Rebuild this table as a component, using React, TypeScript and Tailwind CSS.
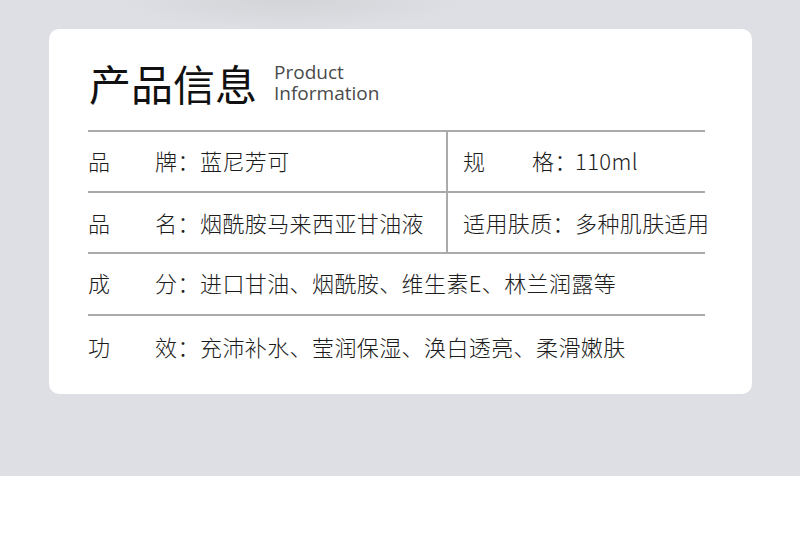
import React from "react";

const cjk = { fontFamily: '"Noto Sans CJK SC", "Noto Sans", sans-serif' };

function Label({ a, b }: { a: string; b: string }) {
  return (
    <span className="flex shrink-0">
      <span className="w-[67px]">{a}</span>
      <span className="w-[45px]">{b}：</span>
    </span>
  );
}

function Cell({ a, b, value }: { a: string; b: string; value: string }) {
  return (
    <div className="flex items-center whitespace-nowrap">
      <Label a={a} b={b} />
      <span>{value}</span>
    </div>
  );
}

export default function App() {
  return (
    <div className="w-[800px] h-[557px] bg-white" style={cjk}>
      <div className="h-[476px] bg-[#dedfe4] bg-[radial-gradient(ellipse_180px_30px_at_290px_0px,#d3d4d8_0%,#dedfe4_100%)] pt-[29px] pl-[49px]">
        <div className="w-[703px] h-[365px] rounded-[10px] bg-white pl-[39px] pt-[29px]">
          <div className="flex items-center pl-[1px]">
            <span className="text-[42px] leading-[50px] text-[#111] font-normal">产品信息</span>
            <div
              className="ml-[17px] flex flex-col text-[19px] text-[#4a4a4a]"
              style={{ fontFamily: '"Open Sans", "Noto Sans", sans-serif' }}
            >
              <div className="leading-[21px] h-[21px]">Product</div>
              <div className="leading-[21px] h-[21px]">Information</div>
            </div>
          </div>
          <div className="mt-[22px] w-[617px] border-t-2 border-[#aaaaaa] text-[22px] text-[#1c1c1c] tracking-[0.4px] font-light">
            <div className="flex h-[61px] border-b-2 border-[#aaaaaa]">
              <div className="w-[360px] shrink-0 border-r-2 border-[#aaaaaa] flex items-center pb-[2px]">
                <Cell a="品" b="牌" value="蓝尼芳可" />
              </div>
              <div className="flex-1 pl-[15px] flex items-center whitespace-nowrap pb-[2px]">
                <span className="flex shrink-0">
                  <span className="w-[69px]">规</span>
                  <span className="w-[43px]">格：</span>
                </span>
                <span>110ml</span>
              </div>
            </div>
            <div className="flex h-[61px] border-b-2 border-[#aaaaaa]">
              <div className="w-[360px] shrink-0 border-r-2 border-[#aaaaaa] flex items-center pb-[1px]">
                <Cell a="品" b="名" value="烟酰胺马来西亚甘油液" />
              </div>
              <div className="flex-1 pl-[15px] flex items-center whitespace-nowrap pb-[1px]">
                <span className="w-[112px] shrink-0">适用肤质：</span>
                <span>多种肌肤适用</span>
              </div>
            </div>
            <div className="flex h-[62px] items-center border-b-2 border-[#aaaaaa] pb-[3px]">
              <Cell a="成" b="分" value="进口甘油、烟酰胺、维生素E、林兰润露等" />
            </div>
            <div className="flex h-[64px] items-center pb-[4px]">
              <Cell a="功" b="效" value="充沛补水、莹润保湿、涣白透亮、柔滑嫩肤" />
            </div>
          </div>
        </div>
      </div>
    </div>
  );
}
